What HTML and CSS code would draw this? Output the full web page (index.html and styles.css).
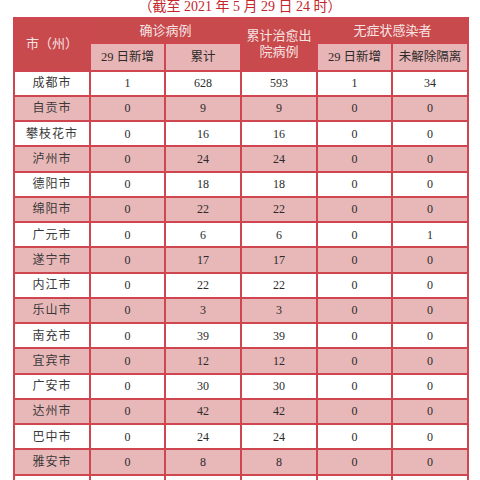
FILE: index.html
```html
<!DOCTYPE html>
<html lang="zh">
<head>
<meta charset="utf-8">
<link rel="stylesheet" href="styles.css">
</head>
<body>
<div class="title">（截至 2021 年 5 月 29 日 24 时）</div>
<table class="stats">
  <colgroup>
    <col class="c1"><col class="c2"><col class="c3"><col class="c4"><col class="c5"><col class="c6">
  </colgroup>
  <thead>
    <tr class="h1">
      <th rowspan="2" class="main">市（州）</th>
      <th colspan="2" class="main">确诊病例</th>
      <th rowspan="2" class="main two">累计治愈出<br>院病例</th>
      <th colspan="2" class="main">无症状感染者</th>
    </tr>
    <tr class="h2">
      <th class="sub"><span class="num">29 </span>日新增</th>
      <th class="sub">累计</th>
      <th class="sub"><span class="num">29 </span>日新增</th>
      <th class="sub">未解除隔离</th>
    </tr>
  </thead>
  <tbody>
    <tr class="w"><td class="city">成都市</td><td>1</td><td>628</td><td>593</td><td>1</td><td>34</td></tr>
    <tr class="p"><td class="city">自贡市</td><td>0</td><td>9</td><td>9</td><td>0</td><td>0</td></tr>
    <tr class="w"><td class="city">攀枝花市</td><td>0</td><td>16</td><td>16</td><td>0</td><td>0</td></tr>
    <tr class="p"><td class="city">泸州市</td><td>0</td><td>24</td><td>24</td><td>0</td><td>0</td></tr>
    <tr class="w"><td class="city">德阳市</td><td>0</td><td>18</td><td>18</td><td>0</td><td>0</td></tr>
    <tr class="p"><td class="city">绵阳市</td><td>0</td><td>22</td><td>22</td><td>0</td><td>0</td></tr>
    <tr class="w"><td class="city">广元市</td><td>0</td><td>6</td><td>6</td><td>0</td><td>1</td></tr>
    <tr class="p"><td class="city">遂宁市</td><td>0</td><td>17</td><td>17</td><td>0</td><td>0</td></tr>
    <tr class="w"><td class="city">内江市</td><td>0</td><td>22</td><td>22</td><td>0</td><td>0</td></tr>
    <tr class="p"><td class="city">乐山市</td><td>0</td><td>3</td><td>3</td><td>0</td><td>0</td></tr>
    <tr class="w"><td class="city">南充市</td><td>0</td><td>39</td><td>39</td><td>0</td><td>0</td></tr>
    <tr class="p"><td class="city">宜宾市</td><td>0</td><td>12</td><td>12</td><td>0</td><td>0</td></tr>
    <tr class="w"><td class="city">广安市</td><td>0</td><td>30</td><td>30</td><td>0</td><td>0</td></tr>
    <tr class="p"><td class="city">达州市</td><td>0</td><td>42</td><td>42</td><td>0</td><td>0</td></tr>
    <tr class="w"><td class="city">巴中市</td><td>0</td><td>24</td><td>24</td><td>0</td><td>0</td></tr>
    <tr class="p"><td class="city">雅安市</td><td>0</td><td>8</td><td>8</td><td>0</td><td>0</td></tr>
    <tr class="w"><td></td><td></td><td></td><td></td><td></td><td></td></tr>
  </tbody>
</table>
</body>
</html>
```
FILE: styles.css
```css
html, body {
  margin: 0;
  padding: 0;
  background: #ffffff;
}
body {
  font-family: "Liberation Serif", "Noto Sans CJK SC", serif;
  color: #2b2b2b;
  overflow: hidden;
}
.title {
  height: 17px;
  line-height: 14px;
  font-size: 14px;
  text-align: center;
  color: #c4262c;
}
.stats {
  margin-left: 13px;
  width: 454px;
  table-layout: fixed;
  border-collapse: collapse;
  border: 2px solid #cf4651;
}
.c1 { width: 76px; }
.c2 { width: 75px; }
.c3 { width: 76px; }
.c4 { width: 76px; }
.c5 { width: 75px; }
.c6 { width: 76px; }
.stats th, .stats td {
  border: 2px solid #cf4651;
  padding: 0;
  text-align: center;
  vertical-align: middle;
  font-weight: normal;
  white-space: nowrap;
  line-height: 16px;
}
.main {
  background: #c84a4c;
  color: #f6e4e4;
  font-size: 13px;
}
.two {
  line-height: 17px;
}
.h1 th { height: 23px; }
.h2 th { height: 25.5px; }
.sub {
  background: #e8b5b6;
  color: #2e2a2a;
  font-size: 12.5px;
}
.num {
  font-family: "Liberation Serif", serif;
}
.stats td {
  font-size: 12px;
  height: 23.25px;
}
.city {
  letter-spacing: 1px;
  color: #3a3a3a;
}
.w td { background: #ffffff; }
.p td { background: #e8b8b9; }
```
